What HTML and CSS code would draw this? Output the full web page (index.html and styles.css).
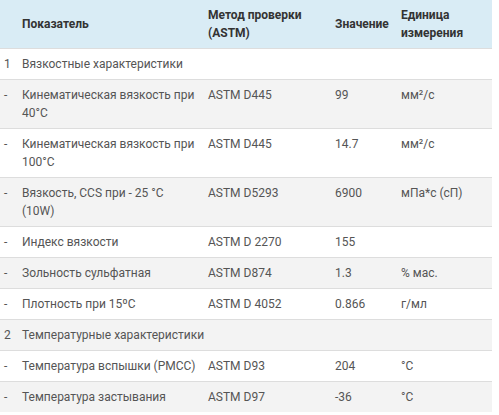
FILE: index.html
```html
<!DOCTYPE html>
<html lang="ru">
<head>
<meta charset="utf-8">
<title>Характеристики</title>
<link rel="stylesheet" href="styles.css">
</head>
<body>
<table class="spec">
  <colgroup>
    <col class="c-num">
    <col class="c-name">
    <col class="c-method">
    <col class="c-value">
    <col class="c-unit">
  </colgroup>
  <thead>
    <tr>
      <th></th>
      <th>Показатель</th>
      <th>Метод проверки (ASTM)</th>
      <th>Значение</th>
      <th>Единица измерения</th>
    </tr>
  </thead>
  <tbody>
    <tr><td>1</td><td class="section" colspan="4">Вязкостные характеристики</td></tr>
    <tr><td>-</td><td>Кинематическая вязкость при 40°C</td><td>ASTM D445</td><td>99</td><td>мм²/с</td></tr>
    <tr><td>-</td><td>Кинематическая вязкость при 100°C</td><td>ASTM D445</td><td>14.7</td><td>мм²/с</td></tr>
    <tr><td>-</td><td>Вязкость, CCS при - 25 °C (10W)</td><td>ASTM D5293</td><td>6900</td><td>мПа*с (сП)</td></tr>
    <tr><td>-</td><td>Индекс вязкости</td><td>ASTM D 2270</td><td>155</td><td></td></tr>
    <tr><td>-</td><td>Зольность сульфатная</td><td>ASTM D874</td><td>1.3</td><td>% мас.</td></tr>
    <tr><td>-</td><td>Плотность при 15ºC</td><td>ASTM D 4052</td><td>0.866</td><td>г/мл</td></tr>
    <tr><td>2</td><td class="section" colspan="4">Температурные характеристики</td></tr>
    <tr><td>-</td><td>Температура вспышки (PMCC)</td><td>ASTM D93</td><td>204</td><td>°C</td></tr>
    <tr><td>-</td><td>Температура застывания</td><td>ASTM D97</td><td>-36</td><td>°C</td></tr>
  </tbody>
</table>
</body>
</html>
```

FILE: styles.css
```css
html, body {
  margin: 0;
  padding: 0;
  background: #ffffff;
}

body {
  font-family: Roboto, "Liberation Sans", sans-serif;
  font-size: 12px;
  line-height: 18px;
  color: #555555;
}

.spec {
  width: 492px;
  border-collapse: collapse;
  table-layout: fixed;
}

.c-num { width: 18px; }
.c-name { width: 186px; }
.c-method { width: 127px; }
.c-value { width: 66px; }
.c-unit { width: 95px; }

.spec th,
.spec td {
  padding: 6px 4px;
  text-align: left;
  vertical-align: top;
}

.spec td:nth-child(2):not(.section) {
  padding-right: 8px;
}

.spec thead th {
  background: #d9ecf5;
  color: #333333;
  font-weight: 700;
  vertical-align: middle;
}

.spec tbody td {
  border-top: 1px solid #dddddd;
}

.spec tbody tr:nth-child(even) td {
  background: #f3f3f3;
}
```
